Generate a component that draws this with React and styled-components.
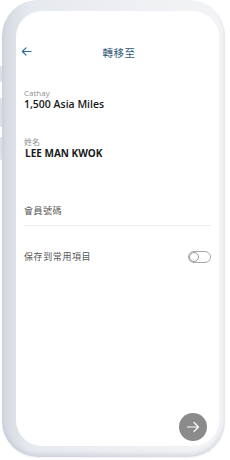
import React from "react";
import styled, { createGlobalStyle } from "styled-components";

const Global = createGlobalStyle`
  html, body { margin: 0; padding: 0; background: #fff; }
  body { font-family: "Open Sans", "Noto Sans CJK TC", sans-serif; }
`;

const Page = styled.div`
  width: 230px;
  height: 460px;
  position: relative;
  overflow: hidden;
`;

const Phone = styled.div`
  position: relative;
  margin: 0 0 0 2px;
  width: 223px;
  height: 457px;
  box-sizing: border-box;
  border-radius: 36px;
  padding: 11px 6px 11px 14px;
  background: linear-gradient(90deg, #d3d9e1 0%, #e6e9ee 12%, #eef0f3 60%, #f3f4f6 100%);
  box-shadow: inset 0 -3px 4px rgba(160, 170, 185, 0.35), 0 1px 2px rgba(0, 0, 0, 0.05);
`;

const SideKey = styled.div`
  position: absolute;
  left: -2px;
  top: ${(p) => p.top}px;
  width: 2px;
  height: ${(p) => p.h}px;
  background: #dde1e7;
  border-radius: 1px;
`;

const Screen = styled.div`
  position: relative;
  height: 100%;
  background: #fff;
  border-radius: 26px;
  padding: 0 7px 0 8px;
  box-sizing: border-box;
  display: flex;
  flex-direction: column;
`;

const Header = styled.div`
  margin-top: 31px;
  height: 20px;
  display: flex;
  align-items: center;
  position: relative;
  justify-content: center;
`;

const Back = styled.div`
  position: absolute;
  left: -3px;
  top: 4px;
  display: flex;
`;

const Title = styled.div`
  font-size: 10.5px;
  color: #2f5878;
  letter-spacing: 0.5px;
  margin-left: 2px;
`;

const Field = styled.div`
  display: flex;
  flex-direction: column;
  margin-top: ${(p) => p.mt}px;
`;

const Label = styled.div`
  font-size: 8px;
  line-height: 10px;
  color: #8f8f8f;
`;

const Value = styled.div`
  font-size: ${(p) => (p.bold ? 10 : 10.5)}px;
  line-height: 13px;
  font-weight: ${(p) => (p.bold ? 700 : 600)};
  color: #1a1a1a;
  margin-left: ${(p) => (p.bold ? 1 : 0)}px;
`;

const InputRow = styled.div`
  margin-top: 44px;
  padding-bottom: 8px;
  border-bottom: 1px solid #eeeeee;
  font-size: 9px;
  line-height: 13px;
  color: #555;
  letter-spacing: 0.5px;
`;

const SaveRow = styled.div`
  margin-top: 24px;
  display: flex;
  align-items: center;
  justify-content: space-between;
  font-size: 9px;
  line-height: 13px;
  color: #555;
  letter-spacing: 0.6px;
`;

const Toggle = styled.div`
  width: 23px;
  height: 12px;
  box-sizing: border-box;
  border: 1px solid #a9a9a9;
  border-radius: 7px;
  position: relative;
  margin-right: 1px;
`;

const Knob = styled.div`
  position: absolute;
  left: 0;
  top: 0;
  width: 10px;
  height: 10px;
  box-sizing: border-box;
  border: 1px solid #999;
  border-radius: 50%;
  background: #fff;
`;

const Fab = styled.div`
  position: absolute;
  right: 12px;
  bottom: 5px;
  width: 28px;
  height: 28px;
  border-radius: 50%;
  background: #8b8b8b;
  display: flex;
  align-items: center;
  justify-content: center;
`;

export default function App() {
  return (
    <Page>
      <Global />
      <Phone>
        <SideKey top={66} h={16} />
        <SideKey top={98} h={29} />
        <SideKey top={137} h={23} />
        <Screen>
          <Header>
            <Back>
              <svg width="11" height="11" viewBox="0 0 12 12">
                <path d="M11 6H1.5M5.5 2L1.5 6l4 4" fill="none" stroke="#2b6ea3" strokeWidth="1.3" strokeLinecap="round" strokeLinejoin="round" />
              </svg>
            </Back>
            <Title>轉移至</Title>
          </Header>
          <Field mt={26}>
            <Label>Cathay</Label>
            <Value>1,500 Asia Miles</Value>
          </Field>
          <Field mt={26}>
            <Label>姓名</Label>
            <Value bold>LEE MAN KWOK</Value>
          </Field>
          <InputRow>會員號碼</InputRow>
          <SaveRow>
            <span>保存到常用項目</span>
            <Toggle>
              <Knob />
            </Toggle>
          </SaveRow>
          <Fab>
            <svg width="14" height="14" viewBox="0 0 14 14">
              <path d="M1.5 7h11M8 2.5L12.5 7 8 11.5" fill="none" stroke="#fff" strokeWidth="1.2" strokeLinecap="round" strokeLinejoin="round" />
            </svg>
          </Fab>
        </Screen>
      </Phone>
    </Page>
  );
}
